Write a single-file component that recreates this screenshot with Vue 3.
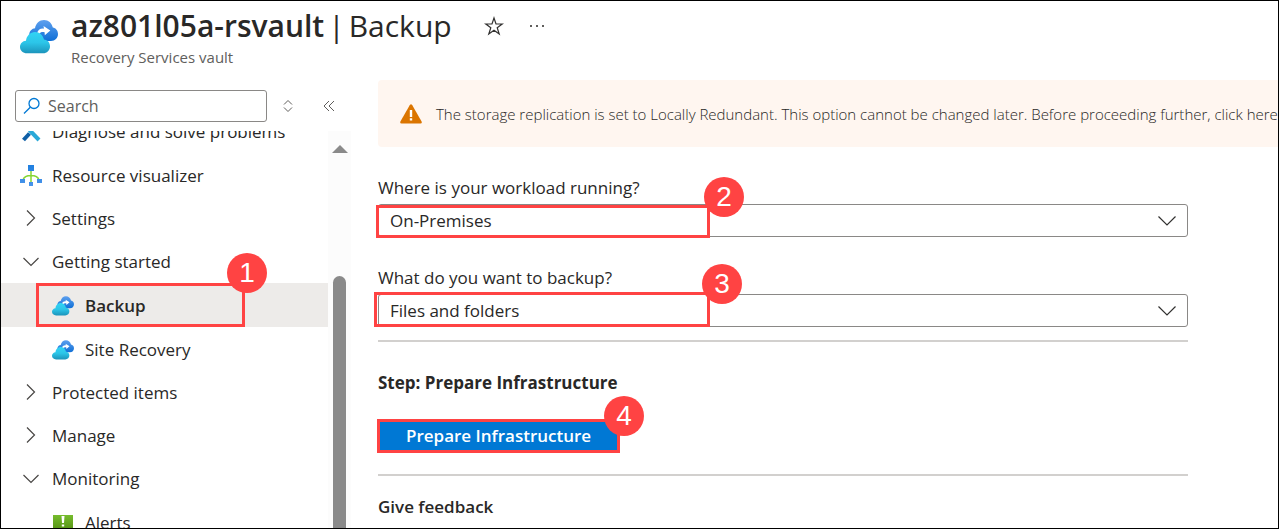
<script setup>
import { ref } from 'vue'

const workload = ref('On-Premises')
const target = ref('Files and folders')
const search = ref('')

const items = [
  { label: 'Diagnose and solve problems', kind: 'leaf', icon: 'diagnose' },
  { label: 'Resource visualizer', kind: 'leaf', icon: 'visualizer' },
  { label: 'Settings', kind: 'group', open: false },
  { label: 'Getting started', kind: 'group', open: true },
  { label: 'Backup', kind: 'child', icon: 'vault', active: true, step: 1 },
  { label: 'Site Recovery', kind: 'child', icon: 'vault' },
  { label: 'Protected items', kind: 'group', open: false },
  { label: 'Manage', kind: 'group', open: false },
  { label: 'Monitoring', kind: 'group', open: true },
  { label: 'Alerts', kind: 'child', icon: 'alerts' },
]
</script>

<template>
  <div class="page">
    <svg class="defs" width="0" height="0" aria-hidden="true">
      <defs>
        <linearGradient id="cloudBack" x1="0" y1="0" x2="0" y2="1">
          <stop offset="0" stop-color="#5ea0ef" />
          <stop offset="1" stop-color="#0f6fd6" />
        </linearGradient>
        <linearGradient id="cloudFront" x1="0" y1="0" x2="0" y2="1">
          <stop offset="0" stop-color="#32d4f5" />
          <stop offset="0.5" stop-color="#2cc5e8" />
          <stop offset="1" stop-color="#1c94bb" />
        </linearGradient>
        <linearGradient id="node" x1="0" y1="0" x2="0" y2="1">
          <stop offset="0" stop-color="#1f7fe0" />
          <stop offset="1" stop-color="#4a94ea" />
        </linearGradient>
        <linearGradient id="alertFill" x1="0" y1="0" x2="0" y2="1">
          <stop offset="0" stop-color="#76bc2d" />
          <stop offset="1" stop-color="#4f8a10" />
        </linearGradient>
        <symbol id="vault" viewBox="0 0 38 34">
          <path fill="url(#cloudBack)" d="M17 21C12.500 21 9.300 18 9.300 14.500C9.300 11 12 8.600 15 8.300C15.800 3.500 19.500 0 24 0C28.500 0 31.800 3 32.800 7.500C35.800 8 38 10.500 38 14C38 18 35 21 31 21Z" />
          <path fill="#fff" d="M17 14C17.500 10 20.500 8.200 24 8.700L23.500 6L30.300 10.500L24.800 15.300L24.600 12.300C22 11.700 20.300 12.300 19.300 14Z" />
          <path fill="url(#cloudFront)" d="M7 33.300C3 33.300 0 30.500 0 27C0 23.500 2.500 21 6 20.700C6.500 16 10.200 12 15 12C19.500 12 23 15 24 19.500C27.500 19.800 30 22.600 30 26.200C30 30.300 27 33.300 23 33.300Z" />
        </symbol>
      </defs>
    </svg>

    <header class="header">
      <svg class="header-icon" aria-hidden="true"><use href="#vault" /></svg>
      <div class="heading">
        <div class="title-row">
          <h1 class="title"><strong>az801l05a-rsvault</strong> <span>|</span> <span>Backup</span></h1>
          <button class="icon-btn star" type="button" aria-label="Add to favorites">
            <svg width="20" height="20" viewBox="0 0 20 20" fill="none" stroke="#323130" stroke-width="1.200"><path d="M10 2L12 8H18.200L13.200 11.700L15.200 18L10 14.200L4.800 18L6.800 11.700L1.800 8H8Z" /></svg>
          </button>
          <button class="icon-btn" type="button" aria-label="More actions">
            <svg width="16" height="20" viewBox="0 0 16 20" fill="#605e5c"><path d="M1 9h2v2H1zM7 9h2v2H7zM13 9h2v2h-2z" /></svg>
          </button>
        </div>
        <p class="subtitle">Recovery Services vault</p>
      </div>
    </header>

    <div class="body">
      <aside class="sidebar">
        <div class="search-row">
          <label class="search">
            <svg width="18" height="18" viewBox="0 0 18 18" fill="none" stroke="#0078d4" stroke-width="1.300" aria-hidden="true"><circle cx="11" cy="6.500" r="5" /><path d="M7.300 10.200L1 16.500" /></svg>
            <input v-model="search" type="text" placeholder="Search" aria-label="Search" />
          </label>
          <button class="icon-btn" type="button" aria-label="Expand or collapse all">
            <svg width="10" height="14" viewBox="0 0 10 14" fill="none" stroke="#605e5c"><path d="M1 5.500L5 1.500L9 5.500M1 8.500L5 12.500L9 8.500" /></svg>
          </button>
          <button class="icon-btn collapse" type="button" aria-label="Collapse menu">
            <svg width="12" height="12" viewBox="0 0 12 12" fill="none" stroke="#605e5c"><path d="M6 1L1 6L6 11M11 1L6 6L11 11" /></svg>
          </button>
        </div>

        <div class="menu">
          <nav class="menu-view">
            <ul class="menu-list">
              <li v-for="item in items" :key="item.label" :class="['item', item.kind, { active: item.active }]">
                <a href="#">
                  <svg v-if="item.kind === 'group' && item.open" class="glyph" viewBox="0 0 22 22" fill="none" stroke="#484644" stroke-width="1.200"><path d="M3.500 7L11 14.500L18.500 7" /></svg>
                  <svg v-else-if="item.kind === 'group'" class="glyph" viewBox="0 0 22 22" fill="none" stroke="#484644" stroke-width="1.200"><path d="M7 2.500L14.500 10L7 17.500" /></svg>
                  <svg v-else-if="item.icon === 'vault'" class="glyph" viewBox="0 0 22 22"><use href="#vault" width="22" height="20" y="1" /></svg>
                  <svg v-else-if="item.icon === 'diagnose'" class="glyph" viewBox="0 0 22 22" fill="none" stroke-width="4"><path stroke="#2aa9d8" d="M9.500 9L19 19" /><path stroke="#0f5fa6" d="M3.500 19L9.500 12.500" /></svg>
                  <svg v-else-if="item.icon === 'visualizer'" class="glyph" viewBox="0 0 22 22"><path fill="none" stroke="#86d633" stroke-width="1.500" d="M11 5V18M3 15C4 11.500 7 10.500 11 10.500C15 10.500 18 11.500 19 15" /><path fill="url(#node)" d="M8 0h6v6H8zM0 14h5v4H0zM17 14h5v4h-5zM9 17h4v4H9z" /></svg>
                  <svg v-else class="glyph" viewBox="0 0 22 22"><path fill="url(#alertFill)" d="M1 3h20v18H1z" /><path fill="#fff" d="M9.500 4h3l-.5 7h-2zM9.800 12.500h2.400v2H9.800z" /></svg>
                  <span>{{ item.label }}</span>
                </a>
                <span v-if="item.step" class="mark mark-nav"><b class="badge">{{ item.step }}</b></span>
              </li>
            </ul>
          </nav>
          <div class="scrollbar" aria-hidden="true">
            <svg width="16" height="8" viewBox="0 0 16 8"><path fill="#8a8a8a" d="M8 0L16 8H0Z" /></svg>
            <div class="thumb"></div>
          </div>
        </div>
      </aside>

      <main class="main">
        <div class="banner" role="status">
          <svg width="22" height="20" viewBox="0 0 22 20" aria-hidden="true"><path fill="#db7500" d="M9.700 1.200Q11-.7 12.300 1.200L21.600 17.500Q22.300 19.500 20.500 19.500H1.500Q-.3 19.500 .4 17.500Z" /><path fill="#fff" d="M9.800 6h2.400v7H9.800zM9.800 14.300h2.400v2.200H9.800z" /></svg>
          <span>The storage replication is set to Locally Redundant. This option cannot be changed later. Before proceeding further, click here</span>
        </div>

        <div class="content">
          <div class="field">
            <label for="workload">Where is your workload running?</label>
            <div class="select">
              <select id="workload" v-model="workload"><option>On-Premises</option></select>
              <svg class="chevron" viewBox="0 0 18 10" fill="none" stroke="#323130" stroke-width="1.200"><path d="M.5 .5L9 9L17.500 .5" /></svg>
              <span class="mark mark-workload"><b class="badge">2</b></span>
            </div>
          </div>
          <div class="field">
            <label for="target">What do you want to backup?</label>
            <div class="select">
              <select id="target" v-model="target"><option>Files and folders</option></select>
              <svg class="chevron" viewBox="0 0 18 10" fill="none" stroke="#323130" stroke-width="1.200"><path d="M.5 .5L9 9L17.500 .5" /></svg>
              <span class="mark mark-target"><b class="badge">3</b></span>
            </div>
          </div>
          <hr />
          <h2 class="step">Step: Prepare Infrastructure</h2>
          <div class="action">
            <button class="primary" type="button">Prepare Infrastructure</button>
            <span class="mark mark-action"><b class="badge">4</b></span>
          </div>
          <hr />
          <h3 class="feedback">Give feedback</h3>
        </div>
      </main>
    </div>
  </div>
</template>

<style>
body {
  margin: 0;
}
</style>

<style scoped>
.page {
  box-sizing: border-box;
  height: 100vh;
  display: flex;
  flex-direction: column;
  overflow: hidden;
  border: 1px solid #000;
  background: #fff;
  color: #292827;
  font: 17px/22px "Open Sans", "Noto Sans", sans-serif;
}
.defs {
  position: absolute;
}
button,
input,
select {
  font: inherit;
  color: inherit;
}
.icon-btn {
  display: flex;
  padding: 0;
  border: 0;
  background: none;
}
.header {
  display: flex;
  flex: none;
  height: 79px;
  gap: 13px;
  padding-left: 19px;
  box-sizing: border-box;
}
.header-icon {
  width: 38px;
  height: 34px;
  margin-top: 19px;
}
.title-row {
  display: flex;
  align-items: center;
  height: 42px;
  padding-top: 4px;
}
.title {
  display: flex;
  gap: 4px;
  margin: 0;
  font-size: 30px;
  line-height: 40px;
  font-weight: 400;
  white-space: nowrap;
}
.title strong {
  font-weight: 600;
}
.star {
  margin: 0 25px 0 32px;
}
.subtitle {
  margin: 0;
  font-size: 15px;
  line-height: 20px;
  color: #605e5c;
}
.body {
  display: flex;
  flex: 1;
  min-height: 0;
}
.sidebar {
  width: 350px;
  flex: none;
  display: flex;
  flex-direction: column;
  padding-top: 10px;
  box-sizing: border-box;
}
.search-row {
  display: flex;
  align-items: center;
  padding-left: 14px;
}
.search {
  box-sizing: border-box;
  width: 252px;
  height: 32px;
  margin-right: 16px;
  display: flex;
  align-items: center;
  gap: 7px;
  padding: 0 7px;
  border: 1px solid #8a8886;
  border-radius: 3px;
}
.search input {
  flex: 1;
  min-width: 0;
  padding: 0;
  border: 0;
  outline: 0;
  background: none;
  font-size: 16px;
}
.search input::placeholder {
  color: #605e5c;
  opacity: 1;
}
.collapse {
  margin-left: 30px;
}
.menu {
  flex: 1;
  min-height: 0;
  display: flex;
  margin-top: 9px;
}
.menu-view {
  flex: 1;
  overflow: hidden;
}
.menu-list {
  list-style: none;
  margin: -22px 0 0;
  padding: 0;
}
.item {
  position: relative;
}
.item a {
  box-sizing: border-box;
  display: flex;
  align-items: center;
  gap: 10px;
  height: 44px;
  padding: 2px 0 0 19px;
  color: inherit;
  text-decoration: none;
}
.item.group a {
  height: 43px;
  padding-top: 0;
}
.item.child a {
  padding-left: 51px;
  gap: 11px;
}
.item.active {
  z-index: 1;
  background: #edebe9;
  font-weight: 600;
}
.glyph {
  flex: none;
  width: 22px;
  height: 22px;
}
.scrollbar {
  width: 23px;
  display: flex;
  flex-direction: column;
  align-items: center;
  padding-top: 14px;
  background: #fcfcfc;
}
.scrollbar svg {
  flex: none;
}
.thumb {
  flex: 1;
  width: 13px;
  margin-top: 123px;
  border-radius: 7px 7px 0 0;
  background: #8a8a8a;
}
.main {
  flex: 1;
  min-width: 0;
  padding-left: 27px;
}
.banner {
  display: flex;
  align-items: center;
  gap: 14px;
  height: 67px;
  padding-left: 22px;
  border-radius: 4px 0 0 4px;
  overflow: hidden;
  white-space: nowrap;
  background: #fff6f0;
  font-size: 15px;
  font-weight: 350;
}
.banner svg {
  flex: none;
}
.content {
  max-width: 810px;
  margin-right: 30px;
}
.field {
  padding-top: 30px;
}
.field label {
  display: block;
  margin-bottom: 5px;
}
.select {
  position: relative;
}
.select select {
  display: block;
  width: 100%;
  height: 33px;
  padding: 0 40px 0 11px;
  border: 1px solid #8a8886;
  border-radius: 3px;
  background: #fff;
  appearance: none;
}
.chevron {
  position: absolute;
  right: 12px;
  top: 12px;
  width: 18px;
  height: 10px;
  pointer-events: none;
}
hr {
  margin: 0;
  border: 0;
  height: 2px;
  background: #d2d0ce;
}
.field + hr {
  margin-top: 13px;
}
.step,
.feedback {
  margin: 0;
  font-size: 17px;
  font-weight: 700;
}
.step {
  padding: 30px 0 25px;
}
.action {
  position: relative;
  width: max-content;
  margin-bottom: 21px;
}
.primary {
  display: block;
  height: 34px;
  padding: 0 28px;
  border: 0;
  background: #0078d4;
  color: #fff;
  font-weight: 600;
}
.feedback {
  padding-top: 20px;
  font-weight: 600;
}
.mark {
  position: absolute;
  box-sizing: border-box;
  border: 3px solid #ff4343;
  pointer-events: none;
}
.mark-nav {
  left: 35px;
  top: 0;
  width: 209px;
  height: 44px;
}
.mark-workload {
  left: -2px;
  top: 1px;
  width: 334px;
  height: 33px;
}
.mark-target {
  left: -4px;
  top: -2px;
  width: 336px;
  height: 35px;
}
.mark-action {
  inset: 0 -1px 0 -1px;
}
.badge {
  position: absolute;
  right: -25px;
  top: -33px;
  width: 40px;
  height: 40px;
  border-radius: 50%;
  background: #ff4343;
  color: #fff;
  font: 28px/40px "Liberation Sans", Arial, sans-serif;
  text-align: center;
}
.mark-workload .badge {
  right: -37px;
  top: -31px;
}
.mark-target .badge {
  right: -35px;
  top: -31px;
}
.mark-action .badge {
  right: -27px;
  top: -26px;
}
</style>
